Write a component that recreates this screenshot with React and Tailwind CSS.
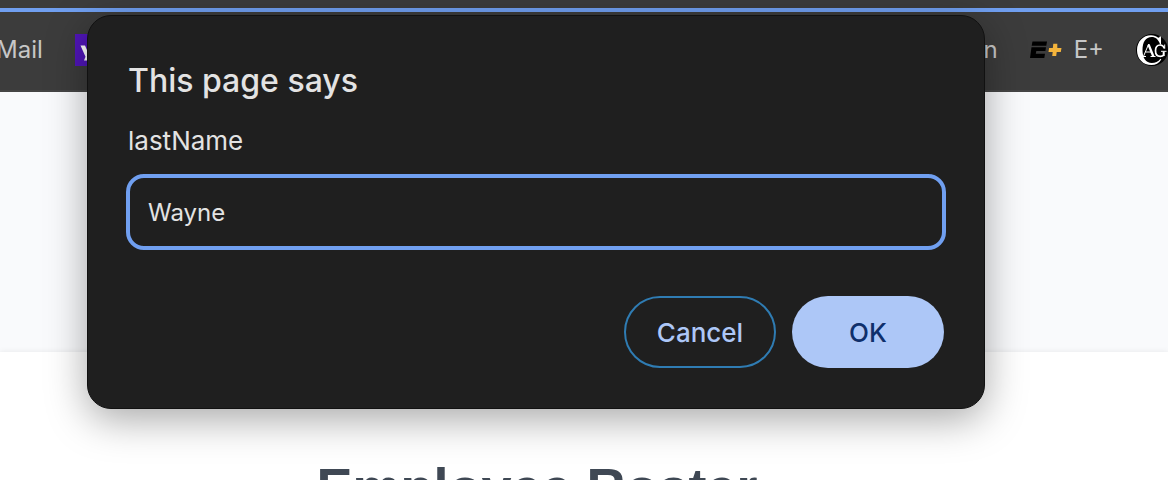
function YahooIcon() {
  return (
    <svg className="size-8 shrink-0" viewBox="0 0 32 32" aria-hidden="true">
      <rect width="32" height="32" fill="#5015b8" />
      <path d="M5.500 11.500H10l2.700 6.300 2.600-6.300h4.400l-6.200 15H9l1.500-3.700z" fill="#fff" />
      <path d="M22 7h5l-3.700 9.500h-4.500z" fill="#fff" />
      <circle cx="20" cy="20.500" r="2.500" fill="#fff" />
    </svg>
  );
}

function EPlusIcon() {
  return (
    <svg className="size-8 shrink-0" viewBox="0 0 32 32" aria-hidden="true">
      <path d="M2.500 7.500H17l-.7 4.300H1.700z" fill="#000" />
      <path d="M1.500 13.300H16l-.6 3.600H6.300l-.5 2.800H15l-.7 4.300H0z" fill="#000" />
      <path d="M23.300 9.800h4v4.100h4.200l-.7 4h-4.100l-.5 4h-4l.5-4h-4.200l.6-4h3.700z" fill="#f4b43c" />
    </svg>
  );
}

function MonogramIcon() {
  return (
    <svg className="size-8 shrink-0" viewBox="0 0 32 32" aria-hidden="true">
      <circle cx="16" cy="16" r="16" fill="#000" />
      <path
        d="M25 2.500v7.800h-1C22.600 5.500 19.500 3 15.700 3 9.800 3 6.500 8 6.500 16s3.400 13 9.300 13c3.500 0 6.300-1.300 8.700-4.300l.8.800C22.900 29.300 19.600 31 15.500 31 7 31 1 24.800 1 16.200 1 7.300 7.200 1.200 15 1.200c3.200 0 5.400.9 7.200 2.500.8 0 1.300-.4 1.600-1.200z"
        fill="#fff"
      />
      <g fill="none" stroke="#fff">
        <path d="M7.500 22.300 12.700 10" strokeWidth="1" />
        <path d="M12.500 10.500 17.300 22.300" strokeWidth="2.300" />
        <path d="M9.500 18h6M5.500 22.500h4.500M14.500 22.500h5" strokeWidth="1" />
        <path d="M28.500 14.500C27.500 12 26.200 11 24.200 11c-3 0-4.700 2.400-4.700 5.800s1.800 5.600 4.800 5.600c1.500 0 2.600-.4 3.500-1.200" strokeWidth="1.700" />
        <path d="M28.700 10.500v4" strokeWidth="1" />
        <path d="M27.700 17.500v4.500" strokeWidth="2" />
        <path d="M25 17.300h5.500" strokeWidth="1" />
      </g>
    </svg>
  );
}

function Bookmark({ icon, label }) {
  return (
    <a href="#" className="flex items-center gap-3" aria-label={label || "Bookmark"}>
      {icon}
      {label && <span>{label}</span>}
    </a>
  );
}

export default function App() {
  return (
    <div className="relative h-screen overflow-hidden bg-[#f9fafc] font-['Inter',sans-serif]">
      <div className="h-2 bg-[#3c3c3c]" />
      <div className="h-1 bg-[#709ff0]" />
      <nav className="flex h-20 items-center justify-between border-b-2 border-[#454545] bg-[#3c3c3c] pb-0.5 text-2xl text-[#c7c7c7]">
        <div className="-ml-1 flex items-center gap-8">
          <Bookmark label="Mail" />
          <Bookmark icon={<YahooIcon />} />
        </div>
        <div className="flex items-center gap-8">
          <Bookmark label="n" />
          <Bookmark icon={<EPlusIcon />} label="E+" />
          <Bookmark icon={<MonogramIcon />} />
        </div>
      </nav>
      <main className="pt-[260px]">
        <section className="bg-white pt-[103px] pr-[94px] pb-24 shadow-[0_0_6px_rgba(0,0,0,0.08)]">
          <h1 className="text-center font-['Liberation_Sans',sans-serif] text-[54px] leading-[64px] font-bold text-[#3f4854]">
            Employee Roster
          </h1>
        </section>
      </main>

      <div className="absolute inset-x-0 top-[15px] flex justify-center pr-24">
        <form
          role="dialog"
          aria-labelledby="dialog-title"
          onSubmit={(e) => e.preventDefault()}
          className="w-full max-w-[898px] rounded-3xl border border-[#111] bg-[#1f1f1f] px-[38px] pt-[45px] pb-10 text-[#e3e3e3] shadow-[0_10px_40px_rgba(0,0,0,0.35)]"
        >
          <h2 id="dialog-title" className="px-0.5 text-[32px] leading-10 font-medium">
            This page says
          </h2>
          <label htmlFor="prompt-value" className="mt-5 block px-0.5 text-[26px] leading-10">
            lastName
          </label>
          <input
            id="prompt-value"
            type="text"
            defaultValue="Wayne"
            className="mt-[13px] block h-[76px] w-full rounded-[18px] border-4 border-[#709ff0] bg-transparent px-[18px] text-2xl outline-none"
          />
          <div className="mt-[46px] flex justify-end gap-4 px-0.5 text-[26px] font-medium">
            <button
              type="button"
              className="h-[72px] w-[152px] rounded-full border-2 border-[#2f7cb3] text-[#adc7f7]"
            >
              Cancel
            </button>
            <button type="submit" className="h-[72px] w-[152px] rounded-full bg-[#adc7f7] text-[#0f2f6b]">
              OK
            </button>
          </div>
        </form>
      </div>
    </div>
  );
}
